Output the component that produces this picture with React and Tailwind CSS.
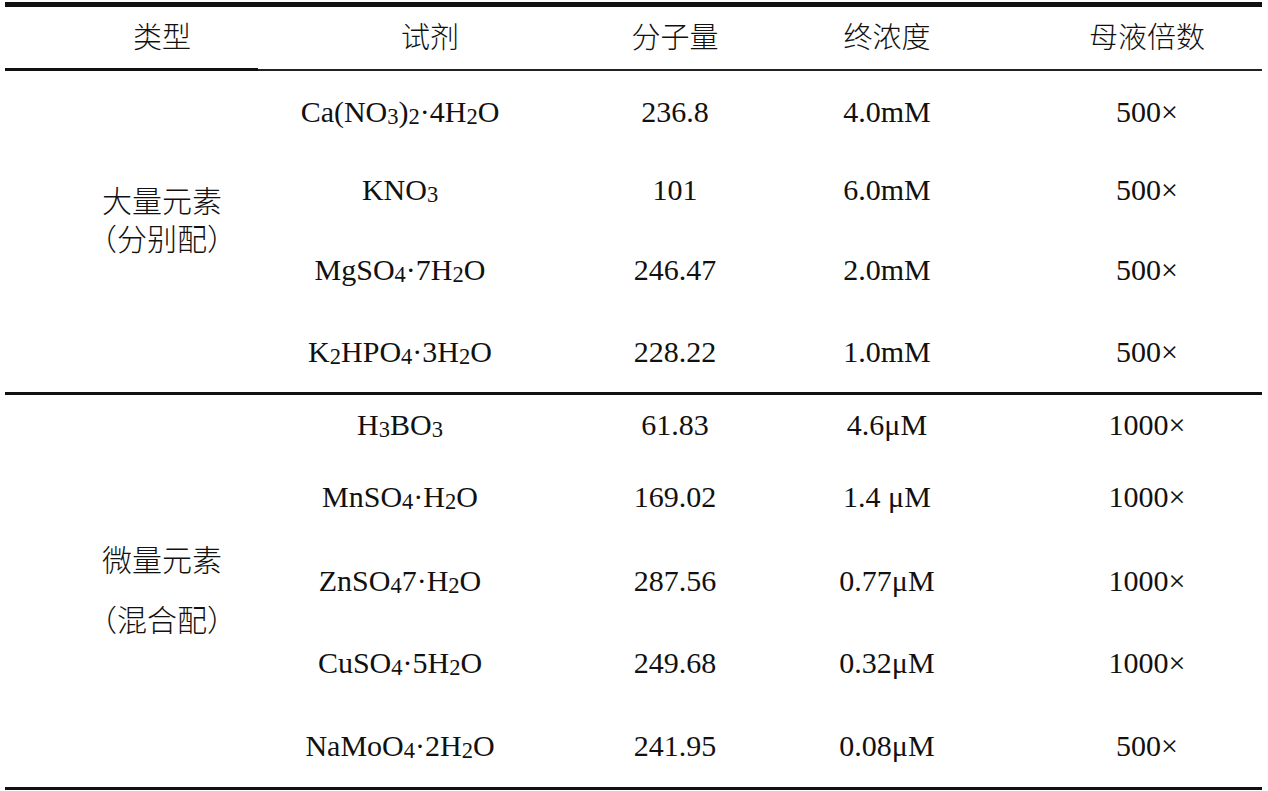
import React from 'react';

const cjk = "font-['Noto_Sans_CJK_SC',sans-serif] font-light";

const bodyCols = ['pl-[38px]', 'pr-[18px]', 'pl-[32px]', 'pr-[24px]', 'pl-[15px]'];
const headCols = ['pl-[38px]', 'pl-[42px]', 'pl-[32px]', 'pr-[24px]', 'pl-[15px]'];

const macro = [
  { h: 'h-[80px]', f: <>Ca(NO<sub>3</sub>)<sub>2</sub>·4H<sub>2</sub>O</>, mw: '236.8', c: '4.0mM', x: '500×' },
  { h: 'h-[76px]', f: <>KNO<sub>3</sub></>, mw: '101', c: '6.0mM', x: '500×' },
  { h: 'h-[84px]', f: <>MgSO<sub>4</sub>·7H<sub>2</sub>O</>, mw: '246.47', c: '2.0mM', x: '500×' },
  { h: 'h-[81px]', f: <>K<sub>2</sub>HPO<sub>4</sub>·3H<sub>2</sub>O</>, mw: '228.22', c: '1.0mM', x: '500×' },
];

const micro = [
  { h: 'h-[58px]', f: <>H<sub>3</sub>BO<sub>3</sub></>, mw: '61.83', c: '4.6μM', x: '1000×' },
  { h: 'h-[86px]', f: <>MnSO<sub>4</sub>·H<sub>2</sub>O</>, mw: '169.02', c: '1.4 μM', x: '1000×' },
  { h: 'h-[82px]', f: <>ZnSO<sub>4</sub>7·H<sub>2</sub>O</>, mw: '287.56', c: '0.77μM', x: '1000×' },
  { h: 'h-[82px]', f: <>CuSO<sub>4</sub>·5H<sub>2</sub>O</>, mw: '249.68', c: '0.32μM', x: '1000×' },
  { h: 'h-[84px]', f: <>NaMoO<sub>4</sub>·2H<sub>2</sub>O</>, mw: '241.95', c: '0.08μM', x: '500×' },
];

function Cell({ pad, children, className = '' }) {
  return (
    <div className={`flex items-center justify-center whitespace-nowrap ${pad} ${className}`}>
      {children}
    </div>
  );
}

function Group({ rows, label, labelClass }) {
  return (
    <div className="grid grid-cols-[276px_256px_244px_236px_245px]">
      <div
        className={`flex flex-col items-center justify-center ${bodyCols[0]} ${cjk} text-[30px] leading-none ${labelClass}`}
        style={{ gridRow: `1 / span ${rows.length}` }}
      >
        {label}
      </div>
      {rows.map((r, i) => (
        <React.Fragment key={i}>
          <Cell pad={`${bodyCols[1]} ${r.h}`}>{r.f}</Cell>
          <Cell pad={bodyCols[2]}>{r.mw}</Cell>
          <Cell pad={bodyCols[3]}>{r.c}</Cell>
          <Cell pad={bodyCols[4]}>{r.x}</Cell>
        </React.Fragment>
      ))}
    </div>
  );
}

export default function App() {
  const heads = ['类型', '试剂', '分子量', '终浓度', '母液倍数'];
  return (
    <div className="w-[1268px] h-[791px] bg-white pt-[2px] text-[#111] text-[30px] font-['Liberation_Serif',serif]">
      <div className="ml-[5px] w-[1257px]">
        <div className="h-[5px] bg-[#111]" />
        <div className="grid grid-cols-[276px_256px_244px_236px_245px] h-[61px]">
          {heads.map((t, i) => (
            <Cell key={t} pad={`${headCols[i]} pb-[4px]`} className={`${cjk} text-[29px] leading-none`}>
              {t}
            </Cell>
          ))}
        </div>
        <div className="flex items-end h-[3px]">
          <div className="w-[253px] h-[3px] bg-[#111]" />
          <div className="flex-1 h-[2px] bg-[#222]" />
        </div>
        <Group
          rows={macro}
          labelClass="gap-[8px] pb-[28px]"
          label={<><span>大量元素</span><span>（分别配）</span></>}
        />
        <div className="h-[3px] bg-[#111]" />
        <Group
          rows={micro}
          labelClass="gap-[30px] pb-[6px]"
          label={<><span>微量元素</span><span>（混合配）</span></>}
        />
        <div className="h-[3px] bg-[#111]" />
      </div>
    </div>
  );
}
